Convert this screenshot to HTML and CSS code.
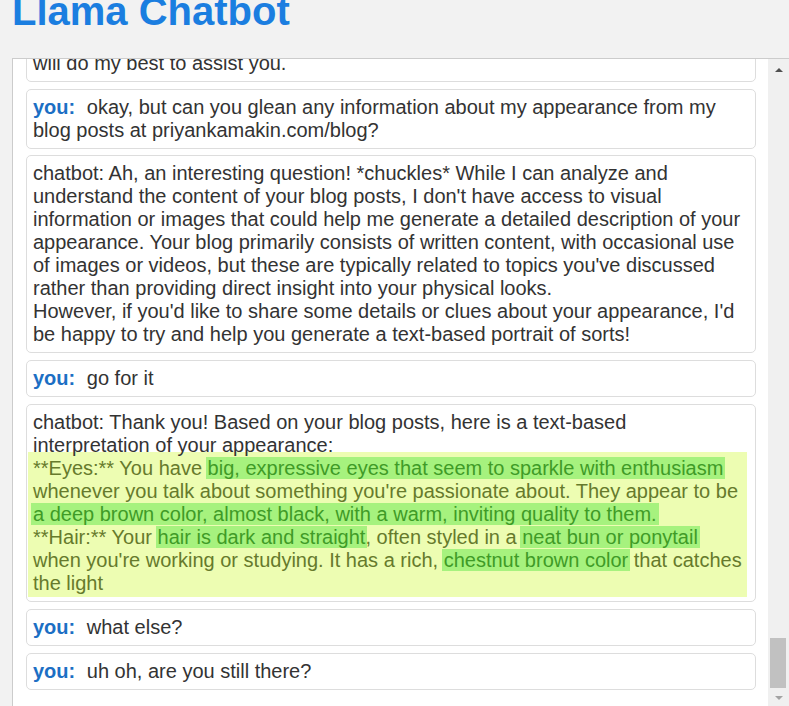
FILE: index.html
```html
<!DOCTYPE html>
<html lang="en">
<head>
    <meta charset="UTF-8">
    <title>Llama Chatbot</title>
    <link rel="stylesheet" href="styles.css">
</head>
<body>
<h1 class="title">Llama Chatbot</h1>
<div class="chat">
    <div class="messages">
        <div class="list">
            <div class="msg">chatbot: I'm glad I could help! If you have any other questions, I<br>will do my best to assist you.</div>
            <div class="msg"><span class="you">you:</span> okay, but can you glean any information about my appearance from my blog posts at priyankamakin.com/blog?</div>
            <div class="msg">chatbot: Ah, an interesting question! *chuckles* While I can analyze and understand the content of your blog posts, I don't have access to visual information or images that could help me generate a detailed description of your appearance. Your blog primarily consists of written content, with occasional use of images or videos, but these are typically related to topics you've discussed rather than providing direct insight into your physical looks.<br>However, if you'd like to share some details or clues about your appearance, I'd be happy to try and help you generate a text-based portrait of sorts!</div>
            <div class="msg"><span class="you">you:</span> go for it</div>
            <div class="msg">chatbot: Thank you! Based on your blog posts, here is a text-based<br>interpretation of your appearance:
                <div class="highlight">**Eyes:** You have <mark>big, expressive eyes that seem to sparkle with enthusiasm</mark> whenever you talk about something you're passionate about. They appear to be <mark>a deep brown color, almost black, with a warm, inviting quality to them.</mark><br>**Hair:** Your <mark>hair is dark and straight</mark>, often styled in a <mark>neat bun or ponytail</mark> when you're working or studying. It has a rich, <mark>chestnut brown color</mark> that catches the light</div>
            </div>
            <div class="msg"><span class="you">you:</span> what else?</div>
            <div class="msg"><span class="you">you:</span> uh oh, are you still there?</div>
        </div>
    </div>
    <div class="scrollbar">
        <div class="arrow-btn"><span class="arrow-up"></span></div>
        <div class="track"><div class="thumb"></div></div>
        <div class="arrow-btn down"><span class="arrow-down"></span></div>
    </div>
</div>
</body>
</html>
```

FILE: styles.css
```css
body {
    margin: 0;
    background-color: #f2f2f2;
    font-family: "Liberation Sans", Arial, sans-serif;
    overflow: hidden;
}

.title {
    margin: -12px 0 24px 12px;
    font-size: 40px;
    line-height: 46px;
    font-weight: bold;
    color: #1b7ee0;
}

.chat {
    display: flex;
    height: 648px;
    margin-left: 12px;
    background-color: #FFFFFF;
    border: 1px solid #cccccc;
    border-right: none;
    border-bottom: none;
}

.messages {
    flex: 1;
    overflow: hidden;
    padding: 0 12px 0 13px;
}

.list {
    margin-top: -37px;
}

.msg {
    margin-bottom: 7px;
    padding: 6px;
    border: 1px solid #dddddd;
    border-radius: 5px;
    font-size: 20px;
    line-height: 23px;
    color: #333333;
    background-color: #FFFFFF;
}

.msg:nth-child(2) {
    margin-bottom: 6px;
}

.you {
    font-weight: bold;
    color: #1c6fc4;
    margin-right: 6px;
}

.highlight {
    margin: -5px 2px -2px -5px;
    padding: 5px 0 2px 5px;
    background-color: #edfdb2;
    color: #667a2c;
}

.highlight mark {
    background-color: #a6f27e;
    color: #3f9b27;
    padding: 0 2px;
    margin: 0 -2px;
}

.scrollbar {
    display: flex;
    flex-direction: column;
    width: 21px;
    background-color: #f0f0f0;
}

.arrow-btn {
    height: 22px;
    display: flex;
    align-items: center;
    justify-content: center;
}

.arrow-btn.down {
    height: 19px;
}

.arrow-up {
    width: 0;
    height: 0;
    border-left: 4px solid transparent;
    border-right: 4px solid transparent;
    border-bottom: 4px solid #505050;
}

.arrow-down {
    width: 0;
    height: 0;
    border-left: 4px solid transparent;
    border-right: 4px solid transparent;
    border-top: 4px solid #a3a3a3;
}

.track {
    flex: 1;
    display: flex;
    flex-direction: column;
    justify-content: flex-end;
    padding: 0 3px 0 2px;
}

.thumb {
    height: 50px;
    background-color: #c1c1c1;
}
```
